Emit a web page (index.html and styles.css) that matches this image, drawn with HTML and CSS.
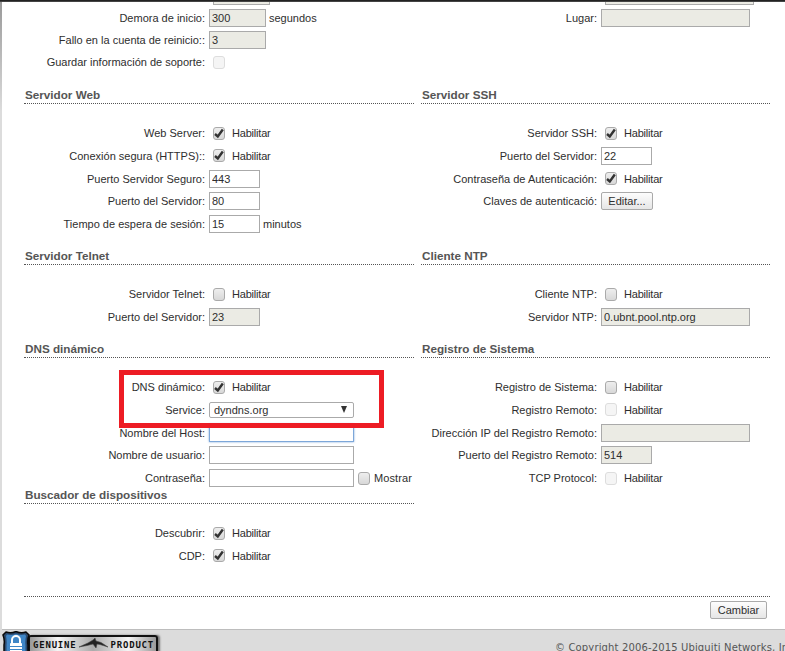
FILE: index.html
```html
<!DOCTYPE html>
<html lang="es">
<head>
<meta charset="utf-8">
<title>Servicios</title>
<link rel="stylesheet" href="styles.css">
</head>
<body>
<div class="topbar"></div>
<div class="shell">
<main class="main">
  <form class="grid">
    <section class="col col-l">
      <div class="clip"><input class="in w57 off" disabled></div>
      <div class="row r22"><label class="lbl">Demora de inicio:</label><input class="in w57 off" disabled value="300"><span class="after">segundos</span></div>
      <div class="row r22"><label class="lbl">Fallo en la cuenta de reinicio::</label><input class="in w57 off" disabled value="3"></div>
      <div class="row r22"><label class="lbl">Guardar información de soporte:</label><input type="checkbox" class="cb" disabled></div>
    </section>
    <section class="col col-r">
      <div class="clip"><input class="in w149 off" disabled></div>
      <div class="row r22"><label class="lbl">Lugar:</label><input class="in w149 off" disabled></div>
    </section>

    <section class="col col-l sec">
      <h3 class="head">Servidor Web</h3>
      <div class="rows">
        <div class="row"><label class="lbl">Web Server:</label><input type="checkbox" class="cb" checked><span class="opt">Habilitar</span></div>
        <div class="row"><label class="lbl">Conexión segura (HTTPS)::</label><input type="checkbox" class="cb" checked><span class="opt">Habilitar</span></div>
        <div class="row"><label class="lbl">Puerto Servidor Seguro:</label><input class="in w51" value="443"></div>
        <div class="row"><label class="lbl">Puerto del Servidor:</label><input class="in w51" value="80"></div>
        <div class="row"><label class="lbl">Tiempo de espera de sesión:</label><input class="in w51" value="15"><span class="after">minutos</span></div>
      </div>
    </section>
    <section class="col col-r sec">
      <h3 class="head">Servidor SSH</h3>
      <div class="rows">
        <div class="row"><label class="lbl">Servidor SSH:</label><input type="checkbox" class="cb" checked><span class="opt">Habilitar</span></div>
        <div class="row"><label class="lbl">Puerto del Servidor:</label><input class="in w51" value="22"></div>
        <div class="row"><label class="lbl">Contraseña de Autenticación:</label><input type="checkbox" class="cb" checked><span class="opt">Habilitar</span></div>
        <div class="row"><label class="lbl">Claves de autenticació:</label><button type="button" class="btn edit">Editar...</button></div>
      </div>
    </section>

    <section class="col col-l sec sec-next">
      <h3 class="head">Servidor Telnet</h3>
      <div class="rows">
        <div class="row"><label class="lbl">Servidor Telnet:</label><input type="checkbox" class="cb"><span class="opt">Habilitar</span></div>
        <div class="row"><label class="lbl">Puerto del Servidor:</label><input class="in w51 off" disabled value="23"></div>
      </div>
    </section>
    <section class="col col-r sec sec-next">
      <h3 class="head">Cliente NTP</h3>
      <div class="rows">
        <div class="row"><label class="lbl">Cliente NTP:</label><input type="checkbox" class="cb"><span class="opt">Habilitar</span></div>
        <div class="row"><label class="lbl">Servidor NTP:</label><input class="in w149 off" disabled value="0.ubnt.pool.ntp.org"></div>
      </div>
    </section>

    <section class="col col-l sec sec-next">
      <h3 class="head">DNS dinámico</h3>
      <div class="rows">
        <div class="row"><label class="lbl">DNS dinámico:</label><input type="checkbox" class="cb" checked><span class="opt">Habilitar</span></div>
        <div class="row"><label class="lbl">Service:</label><div class="select"><span>dyndns.org</span><span class="arrow"></span></div></div>
        <div class="row"><label class="lbl">Nombre del Host:</label><input class="in w145 focus"></div>
        <div class="row"><label class="lbl">Nombre de usuario:</label><input class="in w145"></div>
        <div class="row"><label class="lbl">Contraseña:</label><input class="in w145"><input type="checkbox" class="cb show"><span class="mostrar">Mostrar</span></div>
      </div>
      <div class="mark"></div>
      <h3 class="head tight">Buscador de dispositivos</h3>
      <div class="rows">
        <div class="row"><label class="lbl">Descubrir:</label><input type="checkbox" class="cb" checked><span class="opt">Habilitar</span></div>
        <div class="row"><label class="lbl">CDP:</label><input type="checkbox" class="cb" checked><span class="opt">Habilitar</span></div>
      </div>
    </section>
    <section class="col col-r sec sec-next">
      <h3 class="head">Registro de Sistema</h3>
      <div class="rows">
        <div class="row"><label class="lbl">Registro de Sistema:</label><input type="checkbox" class="cb"><span class="opt">Habilitar</span></div>
        <div class="row"><label class="lbl">Registro Remoto:</label><input type="checkbox" class="cb" disabled><span class="opt">Habilitar</span></div>
        <div class="row"><label class="lbl">Dirección IP del Registro Remoto:</label><input class="in w149 off" disabled></div>
        <div class="row"><label class="lbl">Puerto del Registro Remoto:</label><input class="in w51 off" disabled value="514"></div>
        <div class="row"><label class="lbl">TCP Protocol:</label><input type="checkbox" class="cb" disabled><span class="opt">Habilitar</span></div>
      </div>
    </section>
  </form>
  <div class="actions"><button type="button" class="btn save">Cambiar</button></div>
</main>
<footer class="footer">
  <div class="badge">
    <svg class="shield" width="28" height="24" viewBox="0 0 28 24" aria-hidden="true">
      <path d="M4 1 Q9 2.500 14 .5 Q19 2.500 24 1 L27 4 Q25 9 26 14 L26 24 L2 24 L2 14 Q3 9 1 4 Z" fill="#2b4a6e" stroke="#0a0a0a" stroke-width="1.500"/>
      <path d="M5 3.500 Q10 4.500 14 3 Q18 4.500 23 3.500 L24 5 Q23 10 23.500 14 L23.500 24 L4.500 24 L4.500 14 Q5 10 4 5 Z" fill="#3f86c6"/>
      <path d="M10 12 V9 a4 4 0 0 1 8 0 V12" fill="none" stroke="#fff" stroke-width="2"/>
      <rect x="8" y="12" width="12" height="12" rx="1" fill="#fff"/>
      <path d="M8 15.500h12M8 18.500h12" stroke="#3f86c6" stroke-width="1"/>
    </svg>
    <div class="plate">
      <span class="badge-t">GENUINE</span>
      <svg class="bird" width="30" height="12" viewBox="0 0 30 12" aria-hidden="true">
        <path d="M0 10 L9 6 L14 3 L16 1 L17 4 L22 5.500 L29 10 L21 7.500 L18 7 L17 11 L14 7 L8 8.500 Z" fill="#222" stroke="#444" stroke-width=".6"/>
      </svg>
      <span class="badge-t">PRODUCT</span>
    </div>
  </div>
  <p class="copy">© Copyright 2006-2015 Ubiquiti Networks, Inc.</p>
</footer>
</div>
</body>
</html>
```
FILE: styles.css
```css
* { box-sizing: border-box; }
html, body { margin: 0; height: 651px; overflow: hidden; }
body {
  font-family: "Liberation Sans", Arial, sans-serif;
  font-size: 11px;
  color: #2e2e2e;
  background: #dcdcdc;
}
.topbar { height: 2px; background: linear-gradient(#111, #555); }
.shell {
  height: 649px;
  background: linear-gradient(#9a9a9a, #dcdcdc 110px);
  padding-left: 2px;
  display: flex;
  flex-direction: column;
}
.main {
  position: relative;
  height: 628px;
  flex: none;
  background: #fff;
  padding: 0 15px 0 22px;
  border-bottom: 1px solid #bdbdbd;
}
.grid {
  display: grid;
  grid-template-columns: 390px 349px;
  column-gap: 7px;
  align-items: start;
  align-content: start;
  height: 594px;
}
.clip { height: 3px; overflow: hidden; display: flex; align-items: flex-end; padding-left: 185px; }
.col-r .clip { padding-left: 180px; }
.row { display: flex; align-items: center; height: 22.75px; }
.r22 { height: 22px; }
.clip + .r22 { margin-top: 2px; }
.lbl { width: 181px; flex: none; text-align: right; white-space: nowrap; }
.col-r .lbl { width: 176px; }
.in {
  height: 18px;
  margin: 0 0 0 4px;
  padding: 0 2px;
  border: 1px solid #aaa;
  border-radius: 0;
  background: #fff;
  font: 11px "Liberation Sans", Arial, sans-serif;
  color: #2e2e2e;
  outline: none;
}
.off { background: #ebebe4; }
.w51 { width: 51px; }
.w57 { width: 57px; }
.w145 { width: 145px; }
.w149 { width: 149px; }
.focus { border-color: #7da7d9; box-shadow: 0 0 2px #7da7d9; }
.after { margin-left: 3px; }
.opt { letter-spacing: -0.2px; }
.cb {
  appearance: none;
  width: 12px;
  height: 13px;
  margin: 0 7px 0 8px;
  flex: none;
  border: 1px solid #aaa;
  border-radius: 3px;
  background: linear-gradient(#eee, #d8d8d8);
}
.cb:disabled { border-color: #ddd; background: #f5f5f5; }
.cb:checked {
  background: url("data:image/svg+xml,%3Csvg xmlns='http://www.w3.org/2000/svg' width='10' height='11' viewBox='0 0 10 11'%3E%3Cpath d='M1 6 L3.800 8.500 L8.800 1.500' fill='none' stroke='%23333' stroke-width='2.400'/%3E%3C/svg%3E") center no-repeat, linear-gradient(#eee, #d8d8d8);
}
.cb.show { margin: 0 4px 0 4px; }
.head {
  margin: 0;
  height: 19px;
  padding: 2px 0 0 1px;
  font-size: 11.7px;
  font-weight: bold;
  line-height: 16px;
  color: #555;
  border-bottom: 1px dotted #555;
}
.sec { margin-top: 12px; }
.sec-next { margin-top: 10.6px; }
.rows { padding-top: 17.8px; }
.tight { margin-top: -4.55px; position: relative; }
.btn {
  height: 18px;
  padding: 0;
  font: 11px "Liberation Sans", Arial, sans-serif;
  color: #2e2e2e;
  background: linear-gradient(#fdfdfd, #e6e6e6);
  border: 1px solid #aaa;
  border-radius: 2px;
}
.edit { margin-left: 4px; width: 52px; }
.save { width: 57px; }
.select {
  width: 145px;
  height: 16px;
  margin-left: 4px;
  padding: 0 6px 0 4px;
  display: flex;
  align-items: center;
  justify-content: space-between;
  border: 1px solid #aaa;
  border-radius: 2px;
  background: #fff;
}
.arrow {
  width: 0;
  height: 0;
  border-left: 3.5px solid transparent;
  border-right: 3.5px solid transparent;
  border-top: 7px solid #333;
}
.mostrar { white-space: nowrap; letter-spacing: .1px; }
.mark {
  position: absolute;
  left: 117px;
  top: 368px;
  width: 265px;
  height: 58px;
  border: 5px solid #ed1c24;
}
.actions {
  border-top: 1px dotted #555;
  padding: 4px 3px 0 0;
  display: flex;
  justify-content: flex-end;
}
.footer {
  display: flex;
  align-items: flex-start;
  height: 21px;
  overflow: hidden;
  background: #dcdcdc;
  white-space: nowrap;
}
.badge {
  flex: none;
  width: 158px;
  display: flex;
  align-items: flex-start;
}
.shield { margin-top: 1px; flex: none; position: relative; z-index: 1; }
.plate {
  width: 130px;
  height: 24px;
  margin: 5px 0 0 -2px;
  padding: 3px 0 0 3px;
  display: flex;
  align-items: flex-start;
  background: linear-gradient(90deg, #999, #f5f5f5 22%, #aaa 50%, #f5f5f5 78%, #999);
  border: 2px solid #111;
  border-bottom: 0;
  border-radius: 3px 3px 0 0;
  box-shadow: 2px 0 2px #777;
}
.badge-t {
  font: bold 9px/11px "DejaVu Sans Mono", monospace;
  letter-spacing: .8px;
  color: #111;
}
.bird { margin: -3px 2px 0 2px; flex: none; }
.copy {
  margin: 11px 0 0 395px;
  font: 10px "DejaVu Sans", Verdana, sans-serif;
  letter-spacing: .14px;
  line-height: 14px;
  color: #555;
}
```
